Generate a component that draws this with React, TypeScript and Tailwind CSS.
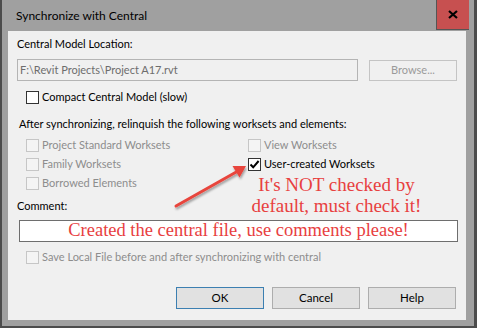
import React from "react";

const ui = "font-['Lato','Liberation_Sans',sans-serif] text-[11px]";
const serif = "font-['Liberation_Serif','Times_New_Roman',serif] text-[#e8403f]";

const Box = ({ checked = false, disabled = false }: { checked?: boolean; disabled?: boolean }) => (
  <span
    className={
      "flex h-[13px] w-[13px] shrink-0 items-center justify-center border " +
      (disabled ? "border-[#c6c6c6] bg-[#f4f4f4]" : "border-[#333333] bg-white")
    }
  >
    {checked && (
      <svg width="11" height="11" viewBox="0 0 11 11">
        <path d="M1.5 5.5 L4.2 8.3 L9.6 2" fill="none" stroke="#000" strokeWidth="2" />
      </svg>
    )}
  </span>
);

const Check = ({
  label,
  checked = false,
  disabled = false,
}: {
  label: string;
  checked?: boolean;
  disabled?: boolean;
}) => (
  <div className="flex h-[19px] items-center gap-[3px]">
    <Box checked={checked} disabled={disabled} />
    <span className={disabled ? "text-[#8d8d8d]" : "text-black"}>{label}</span>
  </div>
);

const Btn = ({ text, primary = false }: { text: string; primary?: boolean }) => (
  <button
    className={
      "flex h-[22px] w-[88px] items-center justify-center border bg-[#e1e1e1] text-[11.5px] text-black " +
      (primary ? "border-[#3c7fb1]" : "border-[#adadad]")
    }
  >
    {text}
  </button>
);

export default function App() {
  return (
    <div className={"relative h-[328px] w-[477px] overflow-hidden border-b-2 border-l-2 border-r-[3px] border-[#4c4c4c] bg-[#a0a0a0] " + ui}>
      {/* title bar */}
      <div className="flex h-[31px] items-start">
        <div className="pl-[14px] pt-[7px] text-[12px] text-black">Synchronize with Central</div>
        <div className="flex-1" />
        <div className="mr-[5px] flex h-[30px] w-[33px] items-center justify-center border-l border-b border-[#555] bg-[#c75050]">
          <svg width="10" height="9" viewBox="0 0 10 9">
            <path d="M1 1 L9 8 M9 1 L1 8" stroke="#000" strokeWidth="2.2" />
          </svg>
        </div>
      </div>

      {/* content panel */}
      <div className="relative ml-[6px] h-[289px] w-[458px] bg-[#f0f0f0] text-black">
        <div className="flex flex-col px-[9px]">
          <div className="flex h-[22px] items-end pb-[1px]">Central Model Location:</div>
          <div className="mt-[6px] flex gap-[11px]">
            <div className="flex h-[22px] w-[341px] items-center border border-[#b4b4b4] bg-[#f0f0f0] pl-[2px] text-[#6d6d6d]">
              F:\Revit Projects\Project A17.rvt
            </div>
            <div className="mt-[1px] flex h-[21px] w-[88px] items-center justify-center border border-[#c4c4c4] bg-[#f0f0f0] text-[#9a9a9a]">
              Browse...
            </div>
          </div>
          <div className="mt-[7px] pl-[9px]">
            <Check label="Compact Central Model (slow)" />
          </div>
          <div className="mt-[8px] flex h-[19px] items-center pl-[2px]">
            After synchronizing, relinquish the following worksets and elements:
          </div>
          <div className="mt-[2px] grid grid-cols-[222px_1fr] pl-[9px]">
            <div className="flex flex-col">
              <Check label="Project Standard Worksets" disabled />
              <Check label="Family Worksets" disabled />
              <Check label="Borrowed Elements" disabled />
            </div>
            <div className="flex flex-col">
              <Check label="View Worksets" disabled />
              <Check label="User-created Worksets" checked />
            </div>
          </div>
          <div className="mt-[4px] flex h-[19px] items-center">Comment:</div>
          <div
            className={
              "ml-[2px] mt-[4px] flex h-[22px] w-[439px] items-center justify-center border border-[#6e6e6e] bg-white text-[18.5px] " +
              serif
            }
          >
            Created the central file, use comments please!
          </div>
          <div className="mt-[6px] pl-[9px]">
            <Check label="Save Local File before and after synchronizing with central" disabled />
          </div>
          <div className="mt-[20px] flex justify-end gap-[8px] pr-[1px]">
            <Btn text="OK" primary />
            <Btn text="Cancel" />
            <Btn text="Help" />
          </div>
        </div>

        {/* annotation */}
        <div className={"absolute left-[243px] top-[143px] w-[171px] text-center text-[19px] leading-[21px] " + serif}>
          It's NOT checked by
          <br />
          default, must check it!
        </div>
        <svg className="absolute left-0 top-0" width="458" height="289" viewBox="0 0 458 289">
          <defs>
            <filter id="sh" x="-20%" y="-20%" width="140%" height="140%">
              <feDropShadow dx="1" dy="2" stdDeviation="1.2" floodColor="#000" floodOpacity="0.35" />
            </filter>
          </defs>
          <g filter="url(#sh)">
            <line x1="168" y1="175" x2="230" y2="140" stroke="#e8453c" strokeWidth="3" strokeLinecap="round" />
            <path d="M238 135 L224.5 135 L231.5 146.5 Z" fill="#e8453c" />
          </g>
        </svg>
      </div>
    </div>
  );
}
